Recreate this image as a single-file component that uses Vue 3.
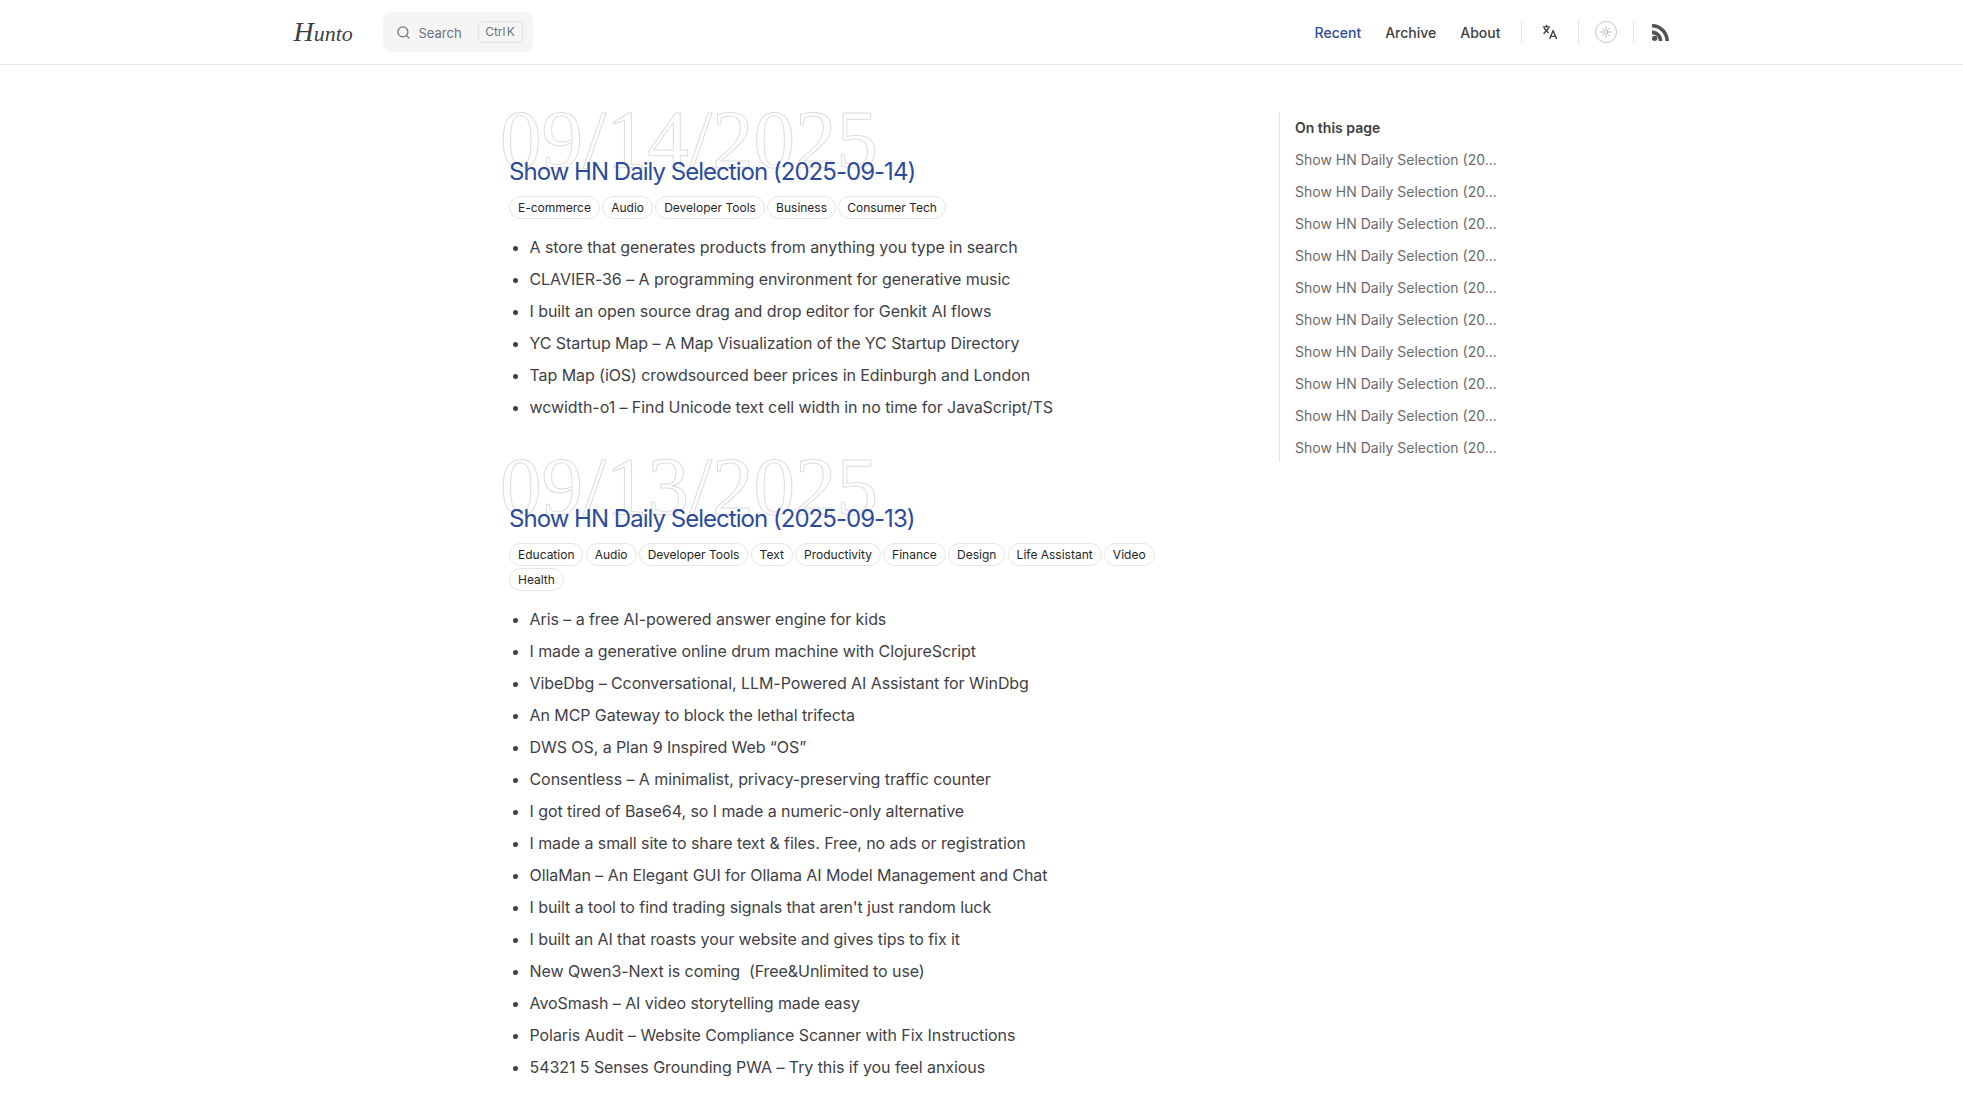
<template>
  <div class="page">
    <header class="navbar">
      <div class="navbar-inner">
        <a class="logo">Hunto</a>
        <div class="search">
          <svg class="search-icon" viewBox="0 0 24 24" fill="none" stroke="currentColor" stroke-width="2" stroke-linecap="round">
            <circle cx="11" cy="11" r="8" />
            <path d="M21 21l-4.3-4.3" />
          </svg>
          <span class="search-text">Search</span>
          <kbd class="search-key">Ctrl K</kbd>
        </div>
        <nav class="nav">
          <a class="nav-link active">Recent</a>
          <a class="nav-link">Archive</a>
          <a class="nav-link last">About</a>
          <span class="nav-sep"></span>
          <svg class="icon-translate" viewBox="0 0 16 16" fill="none" stroke="currentColor" stroke-width="1.4" stroke-linejoin="round">
            <path d="M4.5 0.8v2M0.8 2.9h7.4M2 4l4.6 5M6.8 4L1.6 9.8" />
            <path d="M7.6 15l3.5-8.4L14.6 15M8.8 12.4h4.6" />
          </svg>
          <span class="nav-sep"></span>
          <span class="theme-toggle">
            <svg viewBox="0 0 24 24" fill="none" stroke="currentColor" stroke-width="1.6" stroke-linecap="round">
              <circle cx="12" cy="12" r="4" />
              <path d="M12 2v3M12 19v3M2 12h3M19 12h3M5 5l2 2M17 17l2 2M5 19l2-2M17 7l2-2" />
            </svg>
          </span>
          <span class="nav-sep"></span>
          <svg class="icon-rss" viewBox="3 3 18 18" fill="currentColor">
            <circle cx="5.8" cy="18.2" r="2.8" />
            <path d="M3 3v3.8c7.8 0 14.2 6.4 14.2 14.2H21C21 11.1 12.9 3 3 3zm0 7v3.8c4 0 7.2 3.2 7.2 7.2H14c0-6.1-4.9-11-11-11z" />
          </svg>
        </nav>
      </div>
    </header>

    <div class="layout">
      <main class="content">
        <article v-for="post in posts" :key="post.date" class="post">
          <div class="post-date">{{ post.date }}</div>
          <h2 class="post-title">{{ post.title }}</h2>
          <div class="tags">
            <span v-for="tag in post.tags" :key="tag" class="tag">{{ tag }}</span>
          </div>
          <ul class="post-list">
            <li v-for="item in post.items" :key="item">{{ item }}</li>
          </ul>
        </article>
      </main>
      <aside class="toc">
        <div class="toc-title">On this page</div>
        <a v-for="n in 10" :key="n" class="toc-link">Show HN Daily Selection (20...</a>
      </aside>
    </div>
  </div>
</template>

<script setup>
const posts = [
  {
    date: '09/14/2025',
    title: 'Show HN Daily Selection (2025-09-14)',
    tags: ['E-commerce', 'Audio', 'Developer Tools', 'Business', 'Consumer Tech'],
    items: [
      'A store that generates products from anything you type in search',
      'CLAVIER-36 – A programming environment for generative music',
      'I built an open source drag and drop editor for Genkit AI flows',
      'YC Startup Map – A Map Visualization of the YC Startup Directory',
      'Tap Map (iOS) crowdsourced beer prices in Edinburgh and London',
      'wcwidth-o1 – Find Unicode text cell width in no time for JavaScript/TS'
    ]
  },
  {
    date: '09/13/2025',
    title: 'Show HN Daily Selection (2025-09-13)',
    tags: ['Education', 'Audio', 'Developer Tools', 'Text', 'Productivity', 'Finance', 'Design', 'Life Assistant', 'Video', 'Health'],
    items: [
      'Aris – a free AI-powered answer engine for kids',
      'I made a generative online drum machine with ClojureScript',
      'VibeDbg – Cconversational, LLM-Powered AI Assistant for WinDbg',
      'An MCP Gateway to block the lethal trifecta',
      'DWS OS, a Plan 9 Inspired Web “OS”',
      'Consentless – A minimalist, privacy-preserving traffic counter',
      'I got tired of Base64, so I made a numeric-only alternative',
      'I made a small site to share text & files. Free, no ads or registration',
      'OllaMan – An Elegant GUI for Ollama AI Model Management and Chat',
      "I built a tool to find trading signals that aren't just random luck",
      'I built an AI that roasts your website and gives tips to fix it',
      'New Qwen3-Next is coming  (Free&Unlimited to use)',
      'AvoSmash – AI video storytelling made easy',
      'Polaris Audit – Website Compliance Scanner with Fix Instructions',
      '54321 5 Senses Grounding PWA – Try this if you feel anxious'
    ]
  }
]
</script>

<style>
html,
body {
  margin: 0;
  background: #fff;
  overflow: hidden;
}
</style>

<style scoped>
.page {
  height: 1108px;
  overflow: hidden;
  font-family: Inter, "Liberation Sans", sans-serif;
  color: #3f3f46;
}

/* top bar */
.navbar {
  height: 64px;
  border-bottom: 1px solid #e5e5e5;
}

.navbar-inner {
  width: 1376px;
  height: 100%;
  margin: 0 auto;
  display: flex;
  align-items: center;
}

.logo {
  display: block;
  width: 89px;
  font-family: "Liberation Serif", serif;
  font-style: italic;
  font-size: 22px;
  color: #3f3f46;
}

.logo::first-letter {
  font-size: 28px;
}

.search {
  width: 150px;
  height: 40px;
  box-sizing: border-box;
  display: flex;
  align-items: center;
  padding: 0 10px 0 13px;
  background: #f5f5f5;
  border-radius: 8px;
  color: #6b7280;
  font-size: 13px;
}

.search-icon {
  width: 15px;
  height: 15px;
  margin-right: 8px;
}

.search-text {
  margin-top: 2px;
}

.search-key {
  margin-left: auto;
  width: 45px;
  height: 22px;
  box-sizing: border-box;
  border: 1px solid #e5e5e5;
  border-radius: 4px;
  font-family: inherit;
  font-size: 12px;
  line-height: 20px;
  text-align: center;
  word-spacing: -2px;
}

.nav {
  margin-left: auto;
  display: flex;
  align-items: center;
  font-size: 14px;
  font-weight: 500;
}

.nav-link {
  margin-right: 24px;
  color: #404040;
}

.nav-link.last {
  margin-right: 20px;
}

.nav-link.active {
  color: #2c4a9e;
}

.nav-sep {
  width: 1px;
  height: 24px;
  background: #e5e5e5;
}

.icon-translate {
  width: 16px;
  height: 16px;
  margin: 0 20px;
  color: #404040;
}

.theme-toggle {
  width: 22px;
  height: 22px;
  margin: 0 16px;
  box-sizing: border-box;
  border: 1px solid #c8c8c8;
  border-radius: 50%;
  display: flex;
  align-items: center;
  justify-content: center;
  color: #a3a3a3;
}

.theme-toggle svg {
  width: 12px;
  height: 12px;
}

.icon-rss {
  width: 17px;
  height: 17px;
  margin: 0 1px 0 18px;
  color: #525252;
}

/* body */
.layout {
  display: grid;
  grid-template-columns: 770px 220px;
  margin-left: 509px;
}

.content {
  padding-top: 41px;
}

.post {
  padding-bottom: 30px;
}

.post-date {
  height: 66px;
  margin-left: -9px;
  font-family: "Liberation Serif", serif;
  font-size: 83px;
  line-height: 66px;
  color: transparent;
  -webkit-text-stroke: 1px #dddddd;
  white-space: nowrap;
}

.post-title {
  margin: -16px 0 0;
  font-size: 24px;
  font-weight: 400;
  line-height: 32px;
  letter-spacing: -0.97px;
  color: #2c4a9e;
}

.tags {
  margin-top: 8px;
  display: flex;
  flex-wrap: wrap;
  gap: 2px 2.2px;
  width: 660px;
}

.tag {
  height: 23px;
  box-sizing: border-box;
  padding: 0 8px;
  border: 1px solid #e5e5e5;
  border-radius: 999px;
  font-size: 12px;
  line-height: 21px;
  color: #262626;
}

.post-list {
  margin: 12px 0 0;
  padding-left: 20.5px;
  font-size: 16px;
  line-height: 32px;
  letter-spacing: -0.07px;
}

.post-list li {
  white-space: pre-wrap;
}

.toc {
  margin-top: 47px;
  height: 350px;
  box-sizing: border-box;
  padding-left: 15px;
  border-left: 1px solid #e5e5e5;
  font-size: 14px;
  line-height: 32px;
}

.toc-title {
  font-weight: 600;
  color: #404040;
}

.toc-link {
  display: block;
  color: #6b6b6b;
}
</style>
